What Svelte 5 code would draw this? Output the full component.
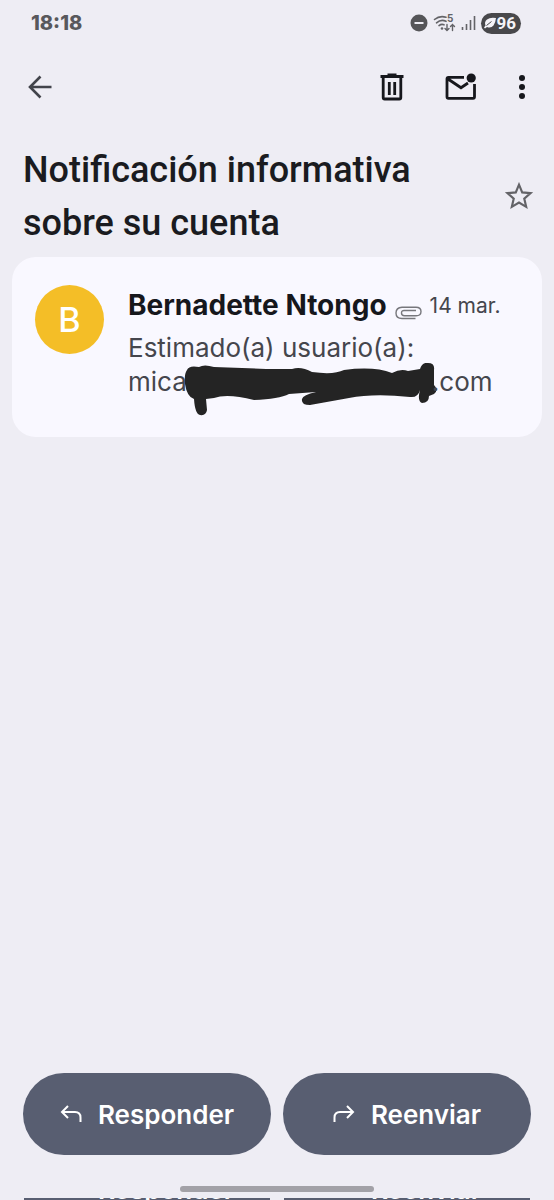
<script lang="ts">
  let starred = $state(false);

  const mail = {
    subject: "Notificación informativa sobre su cuenta",
    sender: "Bernadette Ntongo",
    date: "14 mar.",
    greeting: "Estimado(a) usuario(a):",
  };
</script>

<div class="screen">
  <header class="status">
    <time>18:18</time>
    <div class="indicators">
      <svg width="18" height="18" viewBox="0 0 18 18" aria-hidden="true">
        <circle cx="9" cy="9" r="8.5" fill="#555558" />
        <path d="M4.5 9h9" stroke="#eeedf4" stroke-width="2" />
      </svg>
      <svg class="wifi" width="23" height="20" viewBox="0 0 23 20" aria-hidden="true">
        <g fill="none" stroke="#636367" stroke-width="1.6" stroke-linecap="round">
          <path d="M1.5 6.5Q6.5 2.3 13 4.2" />
          <path d="M3.5 9.8Q8 6 13 8.3" />
          <path d="M6 12.6Q8.5 10.6 11 11.8" />
          <path d="M14 11.5v6m-2-2 2 2 2-2" stroke-width="1.4" />
          <path d="M19.5 17.5v-6m-2 2 2-2 2 2" stroke-width="1.4" />
        </g>
        <circle cx="9" cy="15.5" r="1.3" fill="#636367" />
        <text x="14" y="9">5</text>
      </svg>
      <svg width="15" height="16" viewBox="0 0 15 16" aria-hidden="true">
        <path d="M1.5 12v3M5.5 9v6M9.5 5v10M13.5 1v14" stroke="#636367" stroke-width="1.6" />
      </svg>
      <div class="battery">
        <svg width="12" height="12" viewBox="0 0 12 12" aria-hidden="true">
          <path d="M12 1Q6 0 3 2.5Q0 5 1.5 8.5L0 10.5l1 1 2-1.5Q7 11.5 9.5 8.5Q11.5 6 12 1Z" fill="#f4f3f8" />
          <path d="M2.5 8.5 7.5 4.5" stroke="#48484b" />
        </svg>
        <span>96</span>
      </div>
    </div>
  </header>

  <nav class="toolbar">
    <button class="icon back" aria-label="Atrás">
      <svg width="24" height="24" viewBox="0 0 24 24">
        <path d="M12.5 1.5 2 12l10.5 10.5M2 12h21.5" fill="none" stroke="#42444b" stroke-width="2.6" />
      </svg>
    </button>
    <button class="icon" aria-label="Eliminar">
      <svg width="24" height="28" viewBox="0 0 24 28">
        <path d="M0.5 3.5h23M7.5 2h9" stroke="#16171c" stroke-width="3" />
        <path d="M3.2 4v20.5q0 1.5 1.5 1.5h14.6q1.5 0 1.5-1.5V4M9.3 9v13M14.7 9v13" fill="none" stroke="#16171c" stroke-width="2.8" />
      </svg>
    </button>
    <button class="icon" aria-label="Marcar como no leído">
      <svg width="32" height="28" viewBox="0 0 32 28">
        <path d="M19 4.3H3.5q-1.5 0-1.5 1.5v18q0 1.5 1.5 1.5h24.5q1.5 0 1.5-1.5V11M3 6l13 8.7 7-4.7" fill="none" stroke="#16171c" stroke-width="2.8" />
        <circle cx="26.2" cy="5" r="4.6" fill="#16171c" />
      </svg>
    </button>
    <button class="icon" aria-label="Más opciones">
      <svg width="8" height="26" viewBox="0 0 8 26">
        <g fill="#16171c">
          <circle cx="4" cy="4" r="3" />
          <circle cx="4" cy="13" r="3" />
          <circle cx="4" cy="22" r="3" />
        </g>
      </svg>
    </button>
  </nav>

  <div class="subject">
    <h1>{mail.subject}</h1>
    <button class="icon" aria-label="Destacar" aria-pressed={starred} onclick={() => (starred = !starred)}>
      <svg width="30" height="30" viewBox="0 0 28 28">
        <path
          d="M14 2.5l3 7.2 7.8.7-5.9 5.100 1.800 7.700L14 19.100l-6.700 4.100 1.800-7.700-5.900-5.100 7.800-.7Z"
          fill={starred ? "#636367" : "none"}
          stroke="#636367"
          stroke-width="2"
        />
      </svg>
    </button>
  </div>

  <article class="card">
    <div class="avatar">B</div>
    <div class="message">
      <div class="meta">
        <h2>{mail.sender}</h2>
        <svg class="clip" width="27" height="14" viewBox="0 0 27 14" aria-hidden="true">
          <path
            d="M20.5 12.5H7Q1 12.5 1 7T7 1.2h14q5 0 5 4.3t-5 4.2H9.5Q6.5 9.7 6.5 7t3-2.5H21"
            fill="none"
            stroke="#77777c"
            stroke-width="1.4"
          />
        </svg>
        <time>{mail.date}</time>
      </div>
      <p>{mail.greeting}</p>
      <p class="address">
        <span>mica</span>
        <svg class="redaction" width="254" height="56" viewBox="0 0 254 56" aria-hidden="true">
          <path
            d="M3 7Q5 2 15 4Q20 1 30 4L82 6 108 6Q117 3 128 9Q150 12 160 7Q190 3 208 10Q217 5 224 8L236 6Q238-1 244 0Q251 0 250 7V22Q255 27 250 31L245 33Q245 40 238 40Q233 38 236 27Q234 35 226 34Q190 30 165 35L126 42Q117 42 118 36Q119 32 132 29L105 31Q95 36 70 37Q43 30 30 35L22 36 23 47Q22 53 16 52Q11 51 10 36Q3 34 1 21Q0 11 3 7Z"
            fill="#242424"
          />
        </svg>
        <span>.com</span>
      </p>
    </div>
  </article>

  <footer>
    <div class="actions">
      <button>
        <svg width="22" height="18" viewBox="0 0 22 18" aria-hidden="true">
          <path d="M8 1 2 7l6 6M2 7h13q5.5 0 5.5 5.5V17" fill="none" stroke="#fff" stroke-width="2" />
        </svg>
        Responder
      </button>
      <button>
        <svg width="22" height="18" viewBox="0 0 22 18" aria-hidden="true">
          <path d="M14 1l6 6-6 6M20 7H7Q1.5 7 1.5 12.5V17" fill="none" stroke="#fff" stroke-width="2" />
        </svg>
        Reenviar
      </button>
    </div>
    <div class="handle"></div>
    <div class="next" aria-hidden="true">
      <div>Responder</div>
      <div>Reenviar</div>
    </div>
  </footer>
</div>

<style>
  :global(body) {
    background: #eeedf4;
  }

  .screen {
    display: flex;
    flex-direction: column;
    min-height: 100vh;
    font-family: Inter, Roboto, sans-serif;
    color: #1a1b20;
  }

  h1,
  h2,
  p {
    margin: 0;
  }

  button {
    border: 0;
    font: inherit;
    cursor: pointer;
  }

  .status {
    display: flex;
    align-items: center;
    justify-content: space-between;
    height: 46px;
    padding: 0 33px 0 31px;
  }

  .status time {
    font-size: 20px;
    font-weight: 800;
    color: #58585c;
  }

  .indicators {
    display: flex;
    align-items: center;
    gap: 5px;
  }

  .wifi text {
    font-size: 10px;
    font-weight: 700;
    fill: #636367;
  }

  .battery {
    display: flex;
    align-items: center;
    height: 21px;
    padding: 0 5px 0 3px;
    border-radius: 11px;
    background: #48484b;
    color: #f4f3f8;
    font-family: Roboto, sans-serif;
    font-size: 17px;
    font-weight: 700;
  }

  .toolbar {
    display: flex;
    align-items: center;
    gap: 41px;
    height: 82px;
    padding: 0 28px;
  }

  .icon {
    display: flex;
    padding: 0;
    background: none;
  }

  .back {
    margin-right: auto;
  }

  .subject {
    display: flex;
    align-items: center;
    justify-content: space-between;
    gap: 24px;
    padding: 16px 20px 7px 23px;
  }

  h1 {
    font-family: Roboto, sans-serif;
    font-size: 36px;
    font-weight: 500;
    line-height: 53px;
  }

  .card {
    display: flex;
    gap: 24px;
    margin: 0 12px;
    padding: 28px 24px 38px 23px;
    border-radius: 24px;
    background: #f9f8ff;
  }

  .avatar {
    display: grid;
    place-items: center;
    flex: none;
    width: 69px;
    height: 69px;
    border-radius: 50%;
    background: #f4be27;
    color: #fff;
    font-size: 34px;
    font-weight: 500;
  }

  .message {
    flex: 1;
    min-width: 0;
    color: #45464d;
  }

  .meta {
    display: flex;
    align-items: center;
    gap: 8px;
    height: 40px;
    margin-bottom: 6px;
    white-space: nowrap;
  }

  h2 {
    font-size: 28px;
    font-weight: 700;
    color: #16171c;
  }

  .meta time {
    font-size: 21px;
  }

  .clip {
    flex: none;
    align-self: flex-end;
    margin-bottom: 5px;
  }

  p {
    font-size: 26px;
    line-height: 34px;
  }

  .address {
    display: flex;
  }

  .redaction {
    flex: none;
    margin: -2px -6px -20px -3px;
  }

  footer {
    margin-top: auto;
  }

  .actions {
    display: grid;
    grid-template-columns: 1fr 1fr;
    gap: 12px;
    padding: 0 23px;
  }

  .actions button {
    display: flex;
    align-items: center;
    justify-content: center;
    gap: 16px;
    height: 82px;
    padding: 0 4px;
    border-radius: 41px;
    background: #585e71;
    color: #fff;
    font-size: 26px;
    font-weight: 600;
  }

  .handle {
    width: 35%;
    height: 6px;
    margin: 31px auto 6px;
    border-radius: 3px;
    background: #a2a1a7;
  }

  .next {
    display: grid;
    grid-template: 2px / 1fr 1fr;
    gap: 14px;
    padding: 0 24px;
  }

  /* only a thin edge of the following row of buttons is in view */
  .next div {
    display: flex;
    align-items: flex-end;
    justify-content: center;
    overflow: hidden;
    padding-left: 38px;
    background: #585e71;
    color: #fff;
    font-size: 26px;
    font-weight: 600;
    line-height: 20px;
  }
</style>
